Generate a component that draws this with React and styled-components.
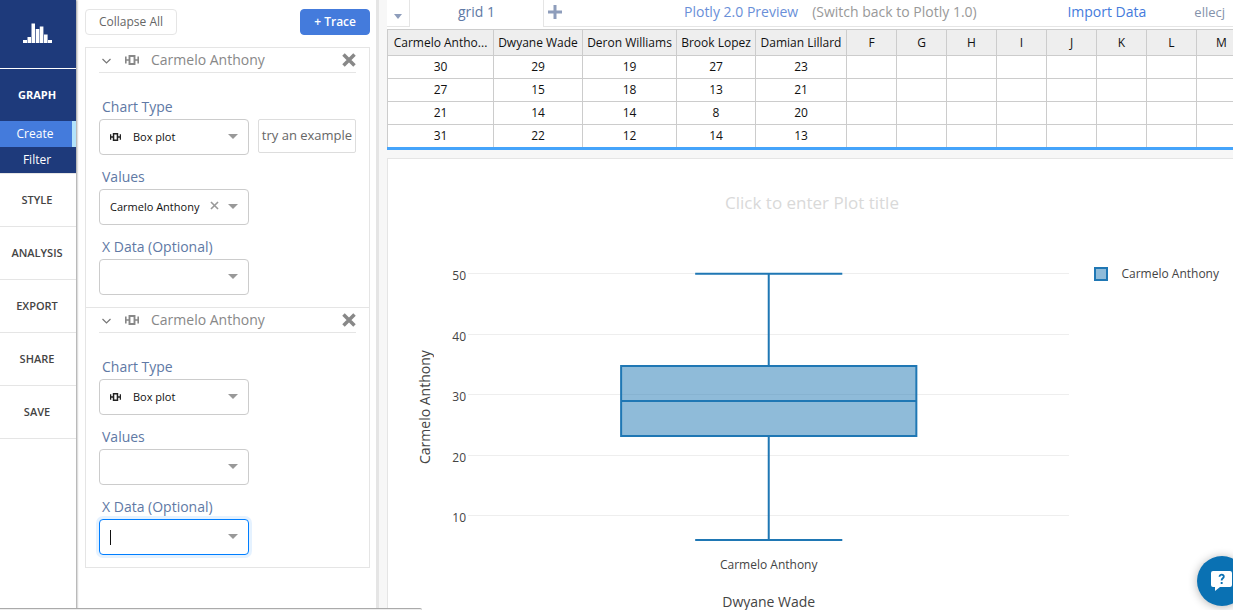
import React from "react";
import styled, { createGlobalStyle } from "styled-components";

const navy = "#1e3a7b";
const blue = "#447bdc";
const line = "#e5e5e5";
const slate = "#6079a5";

const GlobalStyle = createGlobalStyle`
  *, *::before, *::after { box-sizing: border-box; }
  body {
    margin: 0;
    background: #fff;
    color: #444;
    font-family: "Open Sans", "Noto Sans", sans-serif;
    font-size: 12px;
    line-height: 20px;
  }
  button, select, input { font: inherit; color: inherit; margin: 0; }
  button { cursor: pointer; }
`;

const Workspace = styled.div`
  display: flex;
  height: 100vh;
  overflow: hidden;
`;

/* ---------- left navigation ---------- */

const Nav = styled.nav`
  flex: none;
  width: 76px;
  z-index: 1;
  background: #fff;
  box-shadow: 1px 0 2px rgba(0, 0, 0, 0.4);
`;

const NavGroup = styled.div`
  border-bottom: 1px solid ${line};
`;

const LogoLink = styled.a`
  display: flex;
  align-items: center;
  justify-content: center;
  height: 69px;
  padding: 0 2px 2px 0;
  background: ${navy};
  border-bottom: 1px solid #fff;
`;

const NavItem = styled.button`
  display: block;
  width: 100%;
  height: ${(p) => (p.$active ? 52 : 53)}px;
  padding: 0 2px 0 0;
  border: 0;
  border-bottom: ${(p) => (p.$active ? "0" : `1px solid ${line}`)};
  background: ${(p) => (p.$active ? navy : "#fff")};
  color: ${(p) => (p.$active ? "#fff" : "#444")};
  font-size: 11px;
  font-weight: ${(p) => (p.$active ? 700 : 600)};
`;

const SubItem = styled.button`
  display: block;
  width: 100%;
  height: 26px;
  padding: 0 2px 0 0;
  border: 0;
  border-right: ${(p) => (p.$active ? "4px solid #b3e3fb" : "0")};
  background: ${(p) => (p.$active ? blue : navy)};
  color: #fff;
`;

/* ---------- trace editor ---------- */

const Editor = styled.section`
  flex: none;
  width: 303px;
  padding: 9px 6px 0 9px;
  border-right: 3px solid ${line};
`;

const EditorBar = styled.div`
  display: flex;
  justify-content: space-between;
  margin-bottom: 12px;
`;

const BarButton = styled.button`
  height: 26px;
  padding: 0 13px;
  border: 1px solid ${(p) => (p.$primary ? blue : line)};
  border-radius: 4px;
  background: ${(p) => (p.$primary ? blue : "#fff")};
  color: ${(p) => (p.$primary ? "#fff" : "#666")};
  font-weight: ${(p) => (p.$primary ? 600 : 400)};
  line-height: 16px;
`;

const TraceList = styled.div`
  border: 1px solid ${line};
  border-top: 0;
`;

const TraceCard = styled.section`
  padding: 0 13px 12px;
  border-top: 1px solid ${line};
`;

const TraceHeader = styled.header`
  display: flex;
  align-items: center;
  height: 25px;
  margin-bottom: 24px;
  padding-left: 3px;
  border-bottom: 1px solid ${line};
  color: #888;
`;

const TraceName = styled.h2`
  flex: 1;
  margin: 0 0 0 12px;
  font-size: 14px;
  font-weight: 400;
`;

const IconButton = styled.button`
  display: flex;
  align-items: center;
  padding: 0;
  border: 0;
  background: none;
  color: #888;
`;

const CollapseButton = styled(IconButton)`
  margin-right: 14px;
  padding-top: 2px;
`;

const Field = styled.div`
  & + & { margin-top: 12px; }
`;

const FieldLabel = styled.label`
  display: block;
  padding-left: 3px;
  margin-bottom: 2px;
  color: ${slate};
  font-size: 14px;
`;

const FieldRow = styled.div`
  display: flex;
  gap: 9px;
`;

const Control = styled.div`
  position: relative;
  width: 150px;
  height: 36px;
`;

const controlLook = `
  width: 100%;
  height: 100%;
  border: 1px solid #ccc;
  border-radius: 4px;
  background: #fff;
  color: #111;
  font-size: 11px;
  outline: 0;
  appearance: none;
`;

const Select = styled.select`
  ${controlLook}
  padding: 0 30px 0 ${(p) => (p.$withIcon ? 33 : 10)}px;
`;

const SearchInput = styled.input`
  ${controlLook}
  padding: 0 30px 0 10px;
  border-color: #007eff;
  box-shadow: 0 0 0 3px rgba(0, 126, 255, 0.1);
`;

const Overlay = styled.span`
  position: absolute;
  top: 0;
  bottom: ${(p) => p.$lift || 0}px;
  left: ${(p) => p.$left}px;
  display: flex;
  align-items: center;
  color: ${(p) => p.$color || "#999"};
  pointer-events: none;
`;

const ClearButton = styled(IconButton)`
  pointer-events: auto;
  color: #999;
`;

const Caret = styled.i`
  width: 1px;
  height: 15px;
  background: #111;
`;

const ExampleButton = styled.button`
  flex: 1;
  height: 34px;
  padding: 0 0 2px;
  border: 1px solid #ddd;
  border-radius: 2px;
  background: #fff;
  color: #666;
  font-size: 13px;
  white-space: nowrap;
`;

/* ---------- data grid ---------- */

const Main = styled.main`
  flex: 1;
  min-width: 0;
  display: flex;
  flex-direction: column;
  padding-left: 8px;
  background: #f7f7f7;
`;

const TabBar = styled.header`
  display: flex;
  height: 29px;
  padding-bottom: 2px;
  background: #fff;
  font-size: 14px;
  white-space: nowrap;
`;

const TabMenu = styled.button`
  width: 23px;
  padding: 6px 0 0;
  border: 0;
  border-right: 1px solid ${line};
  border-bottom: 1px solid ${line};
  background: #fff;
  display: flex;
  align-items: center;
  justify-content: center;
`;

const Tab = styled.button`
  width: 133px;
  padding: 0 0 3px;
  border: 0;
  background: #fff;
  color: ${slate};
`;

const TabTools = styled.div`
  flex: 1;
  display: flex;
  align-items: center;
  padding: 0 8px 2px 4px;
  border-left: 1px solid ${line};
  border-bottom: 1px solid ${line};
`;

const PreviewNote = styled.p`
  display: flex;
  gap: 14px;
  margin: 0 auto 0 122px;
`;

const TextLink = styled.a`
  color: ${(p) => p.$color};
  font-size: ${(p) => p.$size || 14}px;
  font-weight: ${(p) => p.$weight || 400};
  margin-right: ${(p) => p.$after || 0}px;
  text-decoration: none;
`;

const GridScroll = styled.div`
  flex: none;
  overflow: hidden;
  background: #fff;
  border-bottom: 3px solid #45a4fb;
`;

const Grid = styled.table`
  width: max-content;
  table-layout: fixed;
  border-collapse: separate;
  border-spacing: 0;
  color: #111;
  text-align: center;

  th, td {
    padding: 0;
    border-top: 1px solid #ccc;
    border-left: 1px solid #ccc;
    line-height: 18px;
    white-space: nowrap;
  }
  th { height: 26px; background: #eee; font-weight: 400; }
  td { height: 23px; }
`;

const Col = styled.col`
  width: ${(p) => p.$width}px;
`;

/* ---------- plot ---------- */

const Plot = styled.section`
  flex: 1;
  min-height: 0;
  margin-top: 8px;
  border-top: 1px solid ${line};
  border-left: 1px solid ${line};
  background: #fff;
`;

const PlotTitle = styled.h1`
  margin: 30px 0 43px;
  padding-left: 3px;
  color: #d9d9d9;
  font-size: 17px;
  font-weight: 400;
  line-height: 27px;
  text-align: center;
`;

const PlotBody = styled.div`
  display: grid;
  grid-template-columns: 20px 31px minmax(0, 1fr) auto;
  grid-template-rows: 296px auto auto;
  padding-left: 27px;
`;

const YTitle = styled.span`
  writing-mode: vertical-rl;
  transform: rotate(180deg);
  text-align: center;
  font-size: 14px;
`;

const YTicks = styled.div`
  display: flex;
  flex-direction: column;
  justify-content: space-between;
  height: 260px;
  margin-top: 8px;
  text-align: right;
  line-height: 18px;
`;

const PlotArea = styled.svg`
  display: block;
  width: calc(100% - 2px);
  height: 295px;
  margin-left: 2px;
`;

const XText = styled.span`
  grid-column: 3;
  padding-left: 2px;
  padding-bottom: 17px;
  text-align: center;
  font-size: ${(p) => p.$size}px;
`;

const Legend = styled.div`
  display: flex;
  align-items: center;
  align-self: start;
  gap: 13px;
  padding: 5px 14px 0 25px;
  white-space: nowrap;
`;

const Swatch = styled.i`
  width: 14px;
  height: 14px;
  border: 2px solid #1f77b4;
  background: #8fbbd9;
`;

/* ---------- floating parts ---------- */

const HelpButton = styled.button`
  position: fixed;
  right: -14px;
  bottom: 4px;
  width: 50px;
  height: 50px;
  padding: 0;
  border: 0;
  border-radius: 50%;
  background: #0a71b3;
  box-shadow: 0 1px 10px rgba(0, 0, 0, 0.3);
  display: flex;
  align-items: center;
  justify-content: center;
`;

const StatusEdge = styled.div`
  position: fixed;
  left: 0;
  bottom: 0;
  z-index: 2;
  width: 422px;
  height: 2px;
  border-top: 1px solid #aaa;
  border-radius: 0 3px 0 0;
  background: #eee;
`;

const LogoIcon = () => (
  <svg width="29" height="20" fill="#fff" aria-hidden="true">
    <path d="M0 17h4v3H0zM4.5 14h3.5v6H4.5zM8.5 0.5H12V20H8.5zM12.7 6h3.6v14h-3.6zM16.8 3.500h3.600V20h-3.600zM21 11.500h3.600V20H21zM25 17h4v3h-4z" />
  </svg>
);

const BoxIcon = ({ width = 14, height = 10 }) => (
  <svg width={width} height={height} viewBox="0 0 14 10" fill="none" stroke="currentColor" aria-hidden="true">
    <path d="M.75 1.500v7M13.250 1.500v7" strokeWidth="1.700" />
    <path d="M1 5h3.500M9.500 5H13" strokeWidth="1.700" />
    <path d="M4.500 1h5v8h-5z" strokeWidth="1.900" />
  </svg>
);

const ChevronIcon = () => (
  <svg width="9" height="6" fill="none" stroke="#777" strokeWidth="1.200" aria-hidden="true">
    <path d="M.5 1l4 4 4-4" />
  </svg>
);

const CrossIcon = ({ size, weight }) => (
  <svg width={size} height={size} viewBox="0 0 14 14" stroke="currentColor" strokeWidth={weight} aria-hidden="true">
    <path d="M1.500 1.500l11 11M12.500 1.500l-11 11" />
  </svg>
);

const ArrowIcon = ({ width = 10, color = "#999" }) => (
  <svg width={width} height="5" viewBox="0 0 10 5" preserveAspectRatio="none" fill={color} aria-hidden="true">
    <path d="M0 0h10L5 5z" />
  </svg>
);

const PlusIcon = () => (
  <svg width="14" height="14" stroke="#8e9dbb" strokeWidth="3" aria-hidden="true">
    <path d="M7 0v14M0 7h14" />
  </svg>
);

const HelpIcon = () => (
  <svg width="24" height="22" aria-hidden="true">
    <path d="M3 1h17a2 2 0 0 1 2 2v12a2 2 0 0 1-2 2H10l-5 4v-4H3a2 2 0 0 1-2-2V3a2 2 0 0 1 2-2z" fill="#fff" />
    <path d="M9.500 6.800c.1-3 4.600-2.700 4.300 0-.2 1.500-2.200 1.500-2.200 3.600" fill="none" stroke="#0a71b3" strokeWidth="1.800" />
    <path d="M10.700 12h1.900v2h-1.900z" fill="#0a71b3" />
  </svg>
);

function SelectField({ id, label, value, kind, clearable, focused, children }) {
  return (
    <Field>
      <FieldLabel htmlFor={id}>{label}</FieldLabel>
      <FieldRow>
        <Control>
          {focused ? (
            <SearchInput id={id} type="text" role="combobox" aria-expanded="false" />
          ) : (
            <Select id={id} $withIcon={kind === "chart"} defaultValue={value}>
              <option>{value}</option>
            </Select>
          )}
          {kind === "chart" && (
            <Overlay $left={11} $color="#222"><BoxIcon width={11} height={8} /></Overlay>
          )}
          {focused && <Overlay $left={11}><Caret /></Overlay>}
          {clearable && (
            <Overlay $left={111} $lift={4}>
              <ClearButton aria-label="Clear value"><CrossIcon size={9} weight={2.5} /></ClearButton>
            </Overlay>
          )}
          <Overlay $left={129} $lift={2}><ArrowIcon /></Overlay>
        </Control>
        {children}
      </FieldRow>
    </Field>
  );
}

function Trace({ id, name, values, example, focused }) {
  return (
    <TraceCard>
      <TraceHeader>
        <CollapseButton aria-label="Collapse trace"><ChevronIcon /></CollapseButton>
        <BoxIcon />
        <TraceName>{name}</TraceName>
        <IconButton aria-label="Remove trace"><CrossIcon size={14} weight={3.5} /></IconButton>
      </TraceHeader>
      <SelectField id={`${id}-type`} label="Chart Type" value="Box plot" kind="chart">
        {example && <ExampleButton>try an example</ExampleButton>}
      </SelectField>
      <SelectField id={`${id}-values`} label="Values" value={values} clearable={values !== ""} />
      <SelectField id={`${id}-x`} label="X Data (Optional)" value="" focused={focused} />
    </TraceCard>
  );
}

const columns = [
  ["Carmelo Antho...", 106],
  ["Dwyane Wade", 89],
  ["Deron Williams", 94],
  ["Brook Lopez", 79],
  ["Damian Lillard", 91],
  ..."FGHIJKLM".split("").map((letter) => [letter, 50]),
];

const rows = [
  [30, 29, 19, 27, 23],
  [27, 15, 18, 13, 21],
  [21, 14, 14, 8, 20],
  [31, 22, 12, 14, 13],
];

export default function App() {
  return (
    <>
      <GlobalStyle />
      <Workspace>
        <Nav>
          <LogoLink href="#" aria-label="Home"><LogoIcon /></LogoLink>
          <NavGroup>
            <NavItem $active>GRAPH</NavItem>
            <SubItem $active>Create</SubItem>
            <SubItem>Filter</SubItem>
          </NavGroup>
          {["STYLE", "ANALYSIS", "EXPORT", "SHARE", "SAVE"].map((item) => (
            <NavItem key={item}>{item}</NavItem>
          ))}
        </Nav>

        <Editor>
          <EditorBar>
            <BarButton>Collapse All</BarButton>
            <BarButton $primary>+ Trace</BarButton>
          </EditorBar>
          <TraceList>
            <Trace id="trace-1" name="Carmelo Anthony" values="Carmelo Anthony" example />
            <Trace id="trace-2" name="Carmelo Anthony" values="" focused />
          </TraceList>
        </Editor>

        <Main>
          <TabBar>
            <TabMenu aria-label="Grid menu"><ArrowIcon width={8} color="#8e9dbb" /></TabMenu>
            <Tab>grid 1</Tab>
            <TabTools>
              <IconButton aria-label="Add grid"><PlusIcon /></IconButton>
              <PreviewNote>
                <TextLink href="#" $color="#6a8fd8" $weight={500}>Plotly 2.0 Preview</TextLink>
                <TextLink href="#" $color="#999">(Switch back to Plotly 1.0)</TextLink>
              </PreviewNote>
              <TextLink href="#" $color={blue} $after={48}>Import Data</TextLink>
              <TextLink href="#" $color="#8592ab" $size={13}>ellecj</TextLink>
            </TabTools>
          </TabBar>

          <GridScroll>
            <Grid>
              <colgroup>
                {columns.map(([name, width]) => <Col key={name} $width={width} />)}
              </colgroup>
              <thead>
                <tr>{columns.map(([name]) => <th key={name} scope="col">{name}</th>)}</tr>
              </thead>
              <tbody>
                {rows.map((row, r) => (
                  <tr key={r}>{columns.map(([name], c) => <td key={name}>{row[c]}</td>)}</tr>
                ))}
              </tbody>
            </Grid>
          </GridScroll>

          <Plot>
            <PlotTitle>Click to enter Plot title</PlotTitle>
            <PlotBody>
              <YTitle>Carmelo Anthony</YTitle>
              <YTicks>
                {[50, 40, 30, 20, 10].map((tick) => <span key={tick}>{tick}</span>)}
              </YTicks>
              <PlotArea viewBox="0 0 601 295" preserveAspectRatio="none" role="img" aria-label="Box plot">
                <path d="M0 14.500H601M0 75.500H601M0 135.500H601M0 196.500H601M0 256.500H601" stroke="#eee" />
                <g stroke="#1f77b4" strokeWidth="2" fill="#1f77b4" fillOpacity="0.5">
                  <path d="M153 107h295v70H153z" />
                  <path d="M153 142h295M300.500 107V14.700M300.500 177v104M227 14.700h147M227 281h147" />
                </g>
              </PlotArea>
              <Legend><Swatch />Carmelo Anthony</Legend>
              <XText $size={12}>Carmelo Anthony</XText>
              <XText $size={14}>Dwyane Wade</XText>
            </PlotBody>
          </Plot>
        </Main>
      </Workspace>
      <HelpButton aria-label="Help"><HelpIcon /></HelpButton>
      <StatusEdge />
    </>
  );
}
